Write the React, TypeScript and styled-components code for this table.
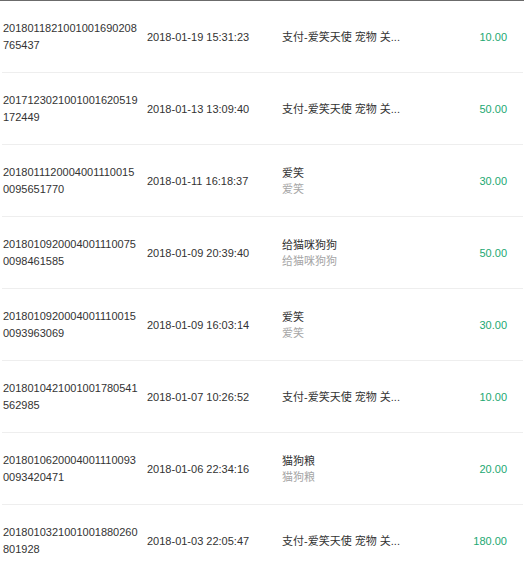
import React from "react";
import styled, { createGlobalStyle } from "styled-components";

const Global = createGlobalStyle`
  html, body { margin: 0; padding: 0; background: #fff; }
  body { font-family: "Liberation Sans", "Noto Sans CJK SC", sans-serif; font-size: 11px; color: #333; }
`;

const Wrapper = styled.div`
  width: 524px;
  border-top: 1px solid #6b6b6b;
  background: #fff;
`;

const List = styled.div`
  margin: 0 1px 0 2px;
`;

const Row = styled.div`
  display: grid;
  grid-template-columns: 144px 135px 1fr auto;
  align-items: center;
  height: 71px;
  border-bottom: 1px solid #eeeeee;
  padding: 0 16px 0 1px;
`;

const TradeNo = styled.div`
  width: 135px;
  word-break: break-all;
  line-height: 17px;
  color: #333;
`;

const DateCell = styled.div`
  color: #333;
  white-space: nowrap;
`;

const Desc = styled.div`
  display: flex;
  flex-direction: column;
  line-height: 16px;
  min-width: 0;
`;

const Title = styled.span`
  color: #333;
  white-space: nowrap;
  overflow: hidden;
  text-overflow: ellipsis;
`;

const Sub = styled.span`
  color: #a6a6a6;
`;

const Amount = styled.div`
  color: #22a872;
  text-align: right;
`;

type Item = { no: string; date: string; title: string; sub?: string; amount: string };

const items: Item[] = [
  { no: "2018011821001001690208765437", date: "2018-01-19 15:31:23", title: "支付-爱笑天使 宠物 关...", amount: "10.00" },
  { no: "2017123021001001620519172449", date: "2018-01-13 13:09:40", title: "支付-爱笑天使 宠物 关...", amount: "50.00" },
  { no: "20180111200040011100150095651770", date: "2018-01-11 16:18:37", title: "爱笑", sub: "爱笑", amount: "30.00" },
  { no: "20180109200040011100750098461585", date: "2018-01-09 20:39:40", title: "给猫咪狗狗", sub: "给猫咪狗狗", amount: "50.00" },
  { no: "20180109200040011100150093963069", date: "2018-01-09 16:03:14", title: "爱笑", sub: "爱笑", amount: "30.00" },
  { no: "2018010421001001780541562985", date: "2018-01-07 10:26:52", title: "支付-爱笑天使 宠物 关...", amount: "10.00" },
  { no: "20180106200040011100930093420471", date: "2018-01-06 22:34:16", title: "猫狗粮", sub: "猫狗粮", amount: "20.00" },
  { no: "2018010321001001880260801928", date: "2018-01-03 22:05:47", title: "支付-爱笑天使 宠物 关...", amount: "180.00" },
];

export default function App() {
  return (
    <>
      <Global />
      <Wrapper>
        <List>
          {items.map((it) => (
            <Row key={it.no}>
              <TradeNo>{it.no}</TradeNo>
              <DateCell>{it.date}</DateCell>
              <Desc>
                <Title>{it.title}</Title>
                {it.sub && <Sub>{it.sub}</Sub>}
              </Desc>
              <Amount>{it.amount}</Amount>
            </Row>
          ))}
        </List>
      </Wrapper>
    </>
  );
}
